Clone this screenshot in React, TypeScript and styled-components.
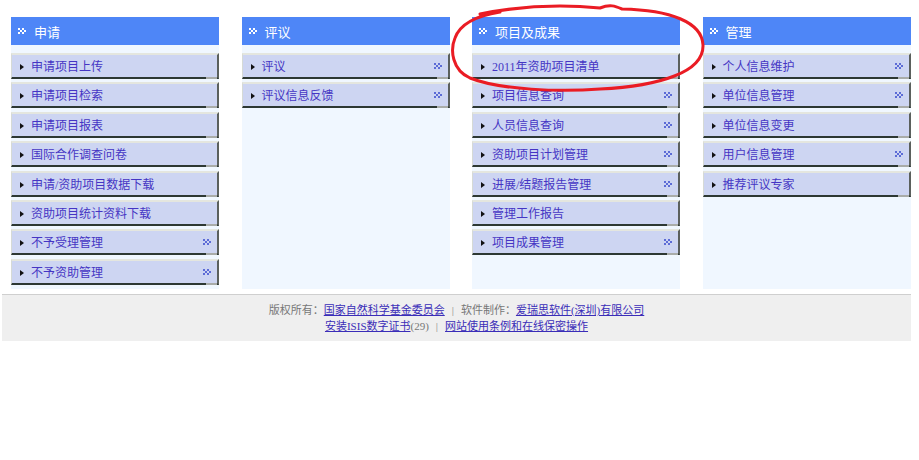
import React from "react";
import styled, { createGlobalStyle } from "styled-components";

const Global = createGlobalStyle`
  html, body { margin: 0; padding: 0; background: #ffffff; }
  body { font-family: "Liberation Serif", "Noto Sans CJK SC", serif; }
`;

const Page = styled.div`
  position: relative;
  width: 919px;
  height: 460px;
  background: #ffffff;
`;

const Columns = styled.div`
  display: grid;
  grid-template-columns: repeat(4, 208px);
  column-gap: 22.5px;
  padding: 17px 0 0 11px;
`;

const Panel = styled.div`
  display: flex;
  flex-direction: column;
  height: 272px;
  background: #f0f7ff;
`;

const Header = styled.div`
  display: flex;
  align-items: center;
  gap: 8px;
  height: 28px;
  padding-left: 7px;
  background: #4e86f7;
  color: #ffffff;
  font-size: 13px;
  font-family: "Noto Sans CJK SC", sans-serif;
`;

const List = styled.div`
  display: flex;
  flex-direction: column;
  gap: 3.4px;
  padding-top: 8px;
`;

const Row = styled.div`
  position: relative;
  display: flex;
  align-items: center;
  height: 22px;
  background: #cdd5f2;
  border-top: 2px solid #e4e6df;
  border-left: 1px solid #d6dad6;
  border-right: 2px solid #5b605d;
  border-bottom: 2px solid #2d3833;
  padding: 0 6px 0 8px;
  &::after {
    content: "";
    position: absolute;
    right: 0;
    bottom: -2px;
    width: 11px;
    height: 2px;
    background: #a9aca9;
  }
`;

const Arrow = styled.span`
  width: 0;
  height: 0;
  border-top: 3px solid transparent;
  border-bottom: 3px solid transparent;
  border-left: 4px solid #111111;
  margin-right: 7px;
  margin-top: 2px;
`;

const Label = styled.span`
  flex: 1;
  font-size: 12px;
  color: #4535c4;
  white-space: nowrap;
`;

const Footer = styled.div`
  margin: 5px 0 0 2px;
  width: 909px;
  height: 47px;
  box-sizing: border-box;
  border-top: 1px solid #cfcfcf;
  background: #efefef;
  padding-top: 7px;
  text-align: center;
  font-size: 11px;
  line-height: 16px;
  color: #777777;
`;

const Link = styled.a`
  color: #3a2db8;
  text-decoration: underline;
`;

const Sep = styled.span`
  color: #888888;
  padding: 0 7px;
`;

const Annotation = styled.svg`
  position: absolute;
  left: 0;
  top: 0;
  pointer-events: none;
`;

const Chevrons = ({ color }: { color: string }) => (
  <svg width="8" height="6" viewBox="0 0 8 6">
    <rect x="0" y="0" width="2" height="2" fill={color} />
    <rect x="2" y="2" width="2" height="2" fill={color} />
    <rect x="0" y="4" width="2" height="2" fill={color} />
    <rect x="4" y="0" width="2" height="2" fill={color} />
    <rect x="6" y="2" width="2" height="2" fill={color} />
    <rect x="4" y="4" width="2" height="2" fill={color} />
  </svg>
);

type Item = { t: string; more?: boolean };
type Col = { title: string; items: Item[] };

const cols: Col[] = [
  {
    title: "申请",
    items: [
      { t: "申请项目上传" },
      { t: "申请项目检索" },
      { t: "申请项目报表" },
      { t: "国际合作调查问卷" },
      { t: "申请/资助项目数据下载" },
      { t: "资助项目统计资料下载" },
      { t: "不予受理管理", more: true },
      { t: "不予资助管理", more: true },
    ],
  },
  {
    title: "评议",
    items: [
      { t: "评议", more: true },
      { t: "评议信息反馈", more: true },
    ],
  },
  {
    title: "项目及成果",
    items: [
      { t: "2011年资助项目清单" },
      { t: "项目信息查询", more: true },
      { t: "人员信息查询", more: true },
      { t: "资助项目计划管理", more: true },
      { t: "进展/结题报告管理", more: true },
      { t: "管理工作报告" },
      { t: "项目成果管理", more: true },
    ],
  },
  {
    title: "管理",
    items: [
      { t: "个人信息维护", more: true },
      { t: "单位信息管理", more: true },
      { t: "单位信息变更" },
      { t: "用户信息管理", more: true },
      { t: "推荐评议专家" },
    ],
  },
];

export default function App() {
  return (
    <Page>
      <Global />
      <Columns>
        {cols.map((c) => (
          <Panel key={c.title}>
            <Header>
              <Chevrons color="#ffffff" />
              <span>{c.title}</span>
            </Header>
            <List>
              {c.items.map((it) => (
                <Row key={it.t}>
                  <Arrow />
                  <Label>{it.t}</Label>
                  {it.more && <Chevrons color="#5c6bd6" />}
                </Row>
              ))}
            </List>
          </Panel>
        ))}
      </Columns>
      <Footer>
        <div>
          版权所有：<Link>国家自然科学基金委员会</Link>
          <Sep>|</Sep>软件制作：<Link>爱瑞思软件(深圳)有限公司</Link>
        </div>
        <div>
          <Link>安装ISIS数字证书</Link>(29)<Sep>|</Sep>
          <Link>网站使用条例和在线保密操作</Link>
        </div>
      </Footer>
      <Annotation width="919" height="110" viewBox="0 0 919 110">
        <path
          d="M 480 14 C 520 6, 560 4, 600 8 C 610 4, 615 6, 622 9 C 670 10, 702 22, 703 45 C 704 72, 660 86, 600 89 C 560 92, 500 90, 470 78 C 452 70, 450 50, 455 38 C 460 24, 475 16, 500 12"
          fill="none"
          stroke="#ea1c24"
          strokeWidth="3"
          strokeLinecap="round"
        />
      </Annotation>
    </Page>
  );
}
